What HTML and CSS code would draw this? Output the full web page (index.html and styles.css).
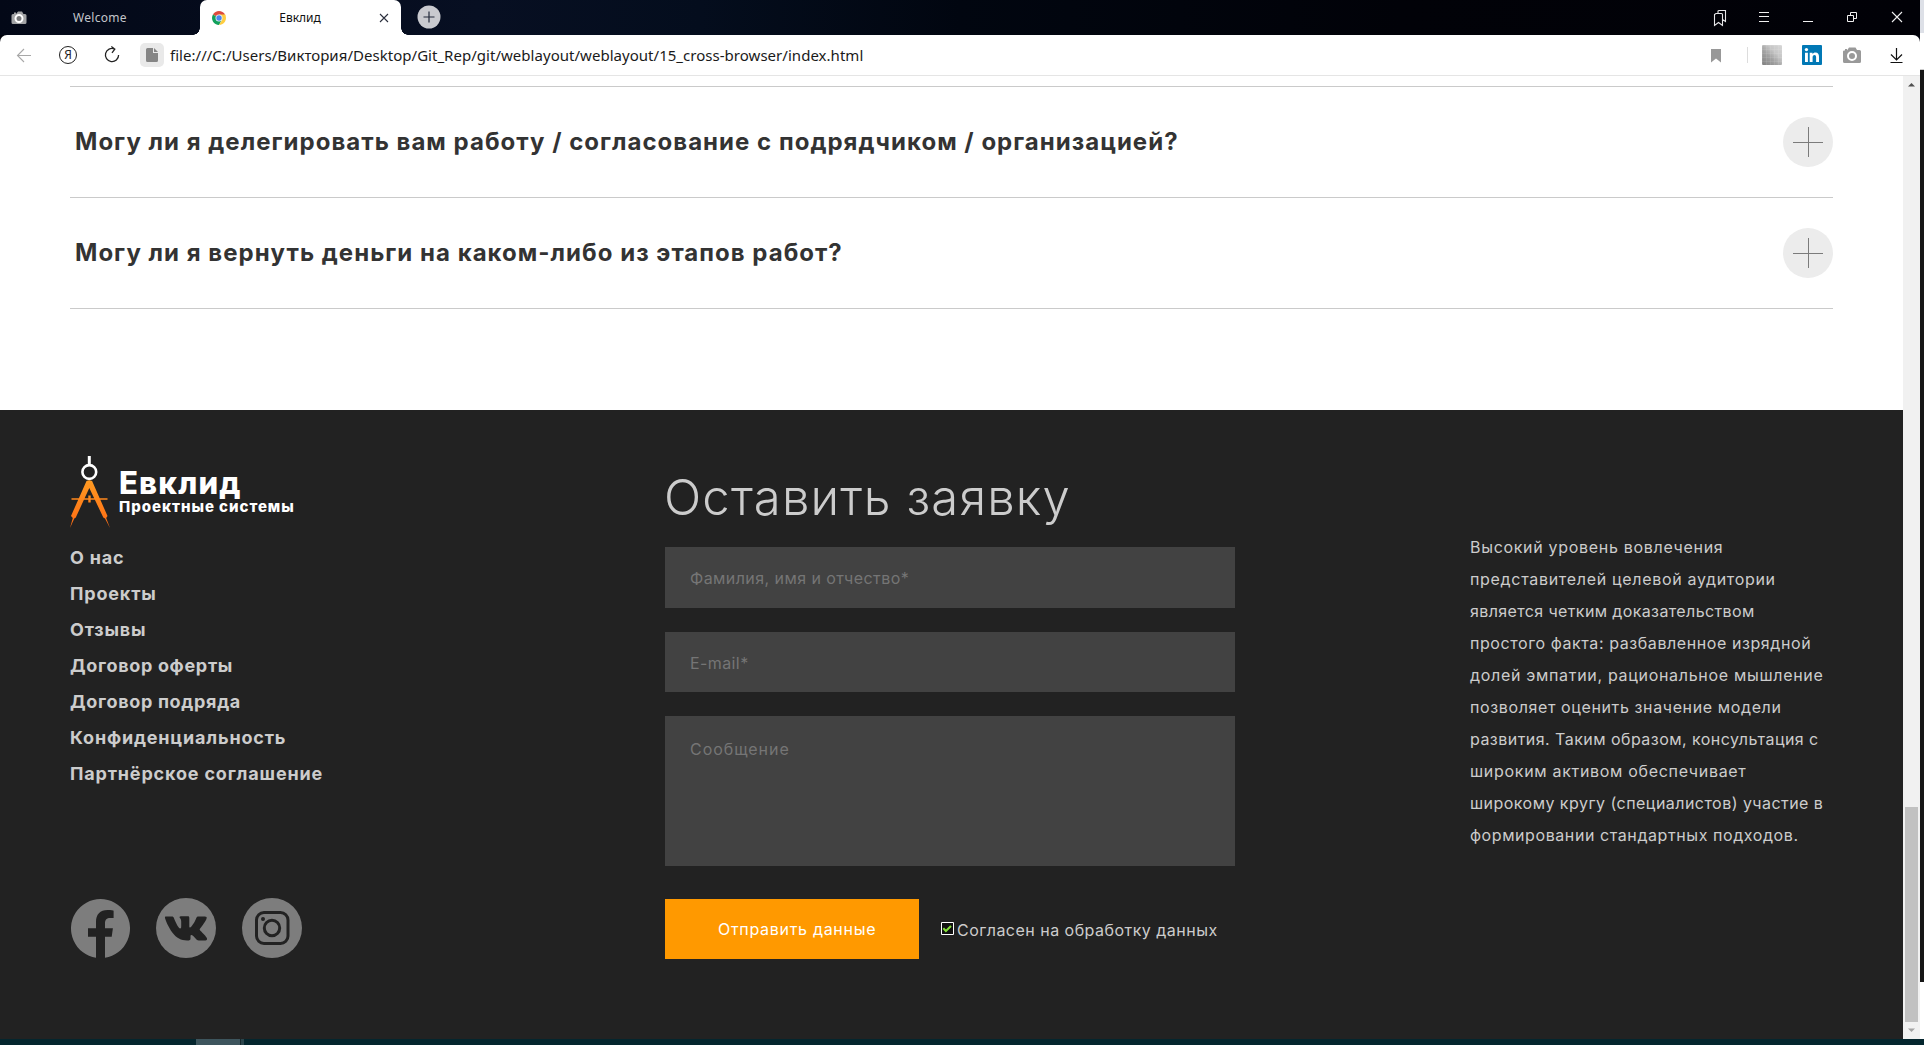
FILE: index.html
```html
<!DOCTYPE html>
<html lang="ru">
<head>
  <meta charset="utf-8">
  <title>Евклид</title>
  <link rel="stylesheet" href="styles.css">
</head>
<body>
  <div class="desktop">
    <div class="window">
      <header class="titlebar">
        <div class="tab">
          <svg class="tab-icon" viewBox="0 0 16 16"><path d="M2 4h1V2.500h2V4l2-2.500h4L12.500 4H14a1.500 1.500 0 0 1 1.500 1.500v7A1.500 1.500 0 0 1 14 14H2a1.500 1.500 0 0 1-1.500-1.500v-7A1.500 1.500 0 0 1 2 4z" fill="#a3a4a6"/><circle cx="8" cy="8.500" r="3.500" fill="#77787a" stroke="#fff" stroke-width="2"/></svg>
          <span class="tab-title tab-title-muted">Welcome</span>
        </div>
        <div class="tab tab-active">
          <svg class="tab-icon" viewBox="0 0 16 16"><path d="M8 8 1.940 4.500A7 7 0 0 1 14.060 4.500z" fill="#dd4b3e"/><path d="M8 8 1.940 4.500A7 7 0 0 0 8 15l3-5.500z" fill="#12a05c"/><path d="M8 8l6.060-3.500A7 7 0 0 1 8 15l3-5z" fill="#fecd41"/><path d="M8 4.600h6.100l.5 1.200L8 8z" fill="#fecd41"/><circle cx="8" cy="8" r="3.500" fill="#f1f1f1"/><circle cx="8" cy="8" r="2.700" fill="#4a86ee"/></svg>
          <span class="tab-title">Евклид</span>
          <svg class="tab-close" viewBox="0 0 10 10"><path d="M1 1l8 8M9 1L1 9" stroke="#2b2f3d" stroke-width="1.100" fill="none"/></svg>
        </div>
        <svg class="tab-new" viewBox="0 0 24 24"><circle cx="12" cy="12" r="11.500" fill="#c9cacf"/><path d="M12 6.500v11M6.500 12h11" stroke="#22283a" stroke-width="1.200"/></svg>
        <div class="window-controls">
          <svg viewBox="0 0 20 20"><path d="M4.500 7.500 6 6.500h5.500a1 1 0 0 1 1 1v11l-4-3-4 3zM8 6.500V4l1-.5h6.500v11l-3-2" fill="none" stroke="#e6e6e8" stroke-width="1.100"/></svg>
          <svg viewBox="0 0 20 20"><path d="M5 5.500h10M5 9.500h10M5 14.500h10" stroke="#f0f0f0"/></svg>
          <svg viewBox="0 0 20 20"><path d="M5 14.500h10" stroke="#f0f0f0"/></svg>
          <svg viewBox="0 0 20 20"><path d="M8.500 8.500v-3h6v6h-3M5.500 8.500h6v6h-6z" fill="none" stroke="#f0f0f0"/></svg>
          <svg viewBox="0 0 20 20"><path d="M6 5l10 10M16 5L6 15" stroke="#f0f0f0" stroke-width="1.100"/></svg>
        </div>
      </header>

      <div class="toolbar">
        <svg class="nav-icon" viewBox="0 0 20 20"><path d="M17 10.500H3.500M10 4l-6.500 6.500L10 17" fill="none" stroke="#a8a8a8" stroke-width="1.100"/></svg>
        <span class="yandex">Я</span>
        <svg class="nav-icon" viewBox="0 0 20 20"><path d="M12.500 3.900A6.600 6.600 0 1 0 16.600 10M9.300 1.500l3.500 2.600L10 7.800" fill="none" stroke="#222" stroke-width="1.300"/></svg>
        <span class="site-badge"><svg viewBox="0 0 12 14"><path d="M1.500 0H7v5h5v7.500a1.500 1.500 0 0 1-1.500 1.500h-9A1.500 1.500 0 0 1 0 12.500v-11A1.500 1.500 0 0 1 1.500 0z" fill="#858585"/><path d="M8 0l4 4H8z" fill="#858585"/></svg></span>
        <span class="url">file:///C:/Users/Виктория/Desktop/Git_Rep/git/weblayout/weblayout/15_cross-browser/index.html</span>
        <div class="extensions">
          <svg class="bookmark" viewBox="0 0 20 20"><path d="M5 4h10v13.500l-5-4-5 4z" fill="#989898"/></svg>
          <span class="separator"></span>
          <span class="ext-tile"></span>
          <svg viewBox="0 0 20 20"><rect width="20" height="20" rx="1" fill="#0178b5"/><path d="M3 7.700h2.900V17H3zM7.700 7.700h2.800V9c.6-.9 1.600-1.500 2.900-1.500 2.700 0 3.600 1.700 3.600 4.300V17h-2.900v-4.700c0-1.200-.3-2.300-1.600-2.300s-1.900 1-1.900 2.300V17H7.700z" fill="#fff"/><circle cx="4.450" cy="4.600" r="1.650" fill="#fff"/></svg>
          <svg viewBox="0 0 20 20"><path d="M2 5.500h1V4h2v1.500L7 2.500h6.500L15 5h2.500A1.500 1.500 0 0 1 19 6.500v10a1.500 1.500 0 0 1-1.500 1.500h-15A1.500 1.500 0 0 1 1 16.500v-10A1.300 1.300 0 0 1 2 5.500z" fill="#999"/><circle cx="10" cy="11" r="4" fill="#999" stroke="#fff" stroke-width="2"/></svg>
          <svg class="download" viewBox="0 0 20 20"><path d="M10.500 3v12M5 9.500l5.500 5.500L16 9.500M4.500 17.500h12" fill="none" stroke="#111" stroke-width="1.200"/></svg>
        </div>
      </div>

      <div class="viewport">
        <main class="page">
          <section class="faq">
            <div class="faq-item">
              <h3 class="faq-title">Могу ли я делегировать вам работу / согласование с подрядчиком / организацией?</h3>
              <svg class="faq-plus" viewBox="0 0 50 50"><circle cx="25" cy="25" r="25" fill="#ececec"/><path d="M25.500 10v30M10 25.500h30" stroke="#7b7b7b"/></svg>
            </div>
            <div class="faq-item">
              <h3 class="faq-title">Могу ли я вернуть деньги на каком-либо из этапов работ?</h3>
              <svg class="faq-plus" viewBox="0 0 50 50"><circle cx="25" cy="25" r="25" fill="#ececec"/><path d="M25.500 10v30M10 25.500h30" stroke="#7b7b7b"/></svg>
            </div>
          </section>

          <footer class="footer">
            <div class="footer-nav">
              <a class="logo">
                <svg class="logo-mark" viewBox="0 0 40 72">
                  <defs><linearGradient id="leg" x1="0" y1="24" x2="0" y2="72" gradientUnits="userSpaceOnUse"><stop offset="0" stop-color="#ff9b22"/><stop offset="1" stop-color="#ff6a13"/></linearGradient></defs>
                  <path d="M17.800 0h3v9h-3z" fill="#fff"/>
                  <circle cx="19.300" cy="16" r="6.900" fill="none" stroke="#fff" stroke-width="2.600"/>
                  <path d="M16.500 25q2.800-1.500 5.600 0L37.500 60l-1.300 2L40 72l-5-9.500-1.700-1L19.300 32 5.800 61.500l-1.500 1L0 72l2.800-10L1 60zM1.500 42.300h36v1.500h-36zM18.300 39.500h2.400v7h-2.400z" fill="url(#leg)"/>
                </svg>
                <span class="logo-text"><span class="logo-name">Евклид</span><span class="logo-sub">Проектные системы</span></span>
              </a>
              <nav class="menu">
                <a>О нас</a>
                <a>Проекты</a>
                <a>Отзывы</a>
                <a>Договор оферты</a>
                <a>Договор подряда</a>
                <a>Конфиденциальность</a>
                <a>Партнёрское соглашение</a>
              </nav>
              <div class="socials">
                <svg viewBox="0 0 60 60"><path d="M26 59.700A29.500 29.500 0 1 1 35 59.700V38.700h6.700l1.200-8.400H35v-5.100c0-3.600 1.700-5.300 5.300-5.300h3.300v-7.200s-2.500-.6-6-.6C30 12.100 26 16.500 26 24.100v6.200h-8v8.400h8z" fill="#7d7d7d"/></svg>
                <svg viewBox="0 0 60 60"><circle cx="30" cy="30" r="30" fill="#7d7d7d"/><path d="M9.800 18.500h6.200c1 0 1.500.5 1.900 1.500 2 5.200 4.800 10.500 6.200 10.500.9 0 1.100-.7 1.100-2.500v-4.500c0-2.500-1-3-1.500-3.700-.4-.7 0-1.500 1-1.500h7.200c1.100 0 1.400.6 1.400 1.700v8.200c0 1 .3 1.300.8 1.300 1 0 4.300-4.700 6.100-9.300.4-1.200 1-1.700 2.200-1.700h6.300c2 0 2.300.8 1.800 2.200-.9 2.800-5.500 8.600-6.400 9.900-.6.9-.5 1.300.1 2 .7.8 4.900 4.600 6.500 7.200.9 1.500.3 2.600-1.400 2.600h-6.500c-1.500 0-2-.6-3-1.700-2.400-2.700-3.600-3.700-4.400-3.700-.6 0-.9.3-.9 1.800v1.600c0 1.400-.5 2-3.500 2-5.800 0-10.600-2.500-14.500-7.700C12 28.700 9.300 21.500 9 20c-.2-1 .1-1.500.8-1.500z" fill="#222"/></svg>
                <svg viewBox="0 0 60 60"><circle cx="30" cy="30" r="30" fill="#7d7d7d"/><rect x="14.500" y="14.500" width="31.500" height="31" rx="7.500" fill="none" stroke="#222" stroke-width="3"/><circle cx="30" cy="30" r="7.700" fill="none" stroke="#222" stroke-width="3"/><circle cx="21" cy="21" r="2" fill="#222"/></svg>
              </div>
            </div>

            <form class="request">
              <h2 class="request-title">Оставить заявку</h2>
              <input class="field field-name" type="text" placeholder="Фамилия, имя и отчество*">
              <input class="field field-mail" type="text" placeholder="E-mail*">
              <textarea class="field field-message" placeholder="Сообщение"></textarea>
              <div class="request-actions">
                <button class="submit" type="button">Отправить данные</button>
                <label class="consent">
                  <svg class="consent-box" viewBox="0 0 13 13"><path d="M.5.500h12v12H.5z" fill="#111" stroke="#fff"/><path d="M2.300 6.200 4.900 9 10 4" fill="none" stroke="#86e03a" stroke-width="2"/></svg>
                  <span>Согласен на обработку данных</span>
                </label>
              </div>
            </form>

            <p class="about">
              <span>Высокий уровень вовлечения</span>
              <span>представителей целевой аудитории</span>
              <span>является четким доказательством</span>
              <span>простого факта: разбавленное изрядной</span>
              <span>долей эмпатии, рациональное мышление</span>
              <span>позволяет оценить значение модели</span>
              <span>развития. Таким образом, консультация с</span>
              <span>широким активом обеспечивает</span>
              <span>широкому кругу (специалистов) участие в</span>
              <span>формировании стандартных подходов.</span>
            </p>
          </footer>
        </main>

        <div class="scrollbar">
          <svg class="scroll-arrow" viewBox="0 0 17 17"><path d="M5 10.500 8.500 7l3.500 3.500z" fill="#505050"/></svg>
          <div class="scroll-thumb"></div>
          <svg class="scroll-arrow" viewBox="0 0 17 17"><path d="M5 6.500 8.500 10 12 6.500z" fill="#a3a3a3"/></svg>
        </div>
      </div>
    </div>
    <div class="backdrop"></div>
    <div class="taskbar"><span class="task"></span><span class="task-edge"></span></div>
  </div>
</body>
</html>
```
FILE: styles.css
```css
* {
  box-sizing: border-box;
}

body {
  margin: 0;
  overflow: hidden;
  font-family: Inter, "Liberation Sans", sans-serif;
}

svg {
  display: block;
  flex: none;
}

.desktop {
  display: grid;
  grid-template-columns: 1920px 4px;
  grid-template-rows: 1039px 6px;
  width: 1924px;
  height: 1045px;
}

.window {
  display: flex;
  flex-direction: column;
  background: #01030c;
}

.backdrop {
  background: linear-gradient(#dde0e7 33px, #fff 33px, #fff 69px, #ccc 69px, #ccc 70px, #161616 70px, #161616 982px, #fff 982px);
}

.taskbar {
  grid-column: 1 / 3;
  display: flex;
  padding-left: 196px;
  background: #04262e;
}

.task {
  width: 44px;
  background: #3d555d;
}

.task-edge {
  width: 4px;
  border-left: 1px solid #16282d;
  background: #2b444b;
}

/* Tabs */

.titlebar {
  display: flex;
  align-items: flex-start;
  height: 35px;
  padding-right: 14px;
  background: linear-gradient(90deg, #030817 0, #070f22 480px, #040d1d 700px, #010610 960px, #010208 1400px, #010107);
}

.tab {
  position: relative;
  display: flex;
  align-items: center;
  width: 200px;
  height: 35px;
  padding-left: 11px;
}

.tab-active {
  width: 201px;
  border-radius: 7px 7px 0 0;
  background: #fff;
}

.tab-active::before,
.tab-active::after {
  content: "";
  position: absolute;
  bottom: 0;
  width: 7px;
  height: 7px;
}

.tab-active::before {
  left: -7px;
  background: radial-gradient(circle at 0 0, transparent 6.5px, #fff 7px);
}

.tab-active::after {
  right: -7px;
  background: radial-gradient(circle at 100% 0, transparent 6.5px, #fff 7px);
}

.tab-icon {
  width: 16px;
  height: 16px;
}

.tab-title {
  width: 146px;
  font: 12px/34px "Noto Sans", sans-serif;
  text-align: center;
  color: #111;
}

.tab-title-muted {
  letter-spacing: 0.3px;
  color: #c3c5ca;
}

.tab-close {
  width: 10px;
  height: 10px;
  margin-left: 6px;
}

.tab-new {
  width: 24px;
  height: 24px;
  margin: 5px auto 0 16px;
}

.window-controls {
  display: flex;
  gap: 24px;
  padding-top: 7px;
}

.window-controls svg {
  width: 20px;
  height: 20px;
}

/* Address bar */

.toolbar {
  display: flex;
  align-items: center;
  height: 41px;
  padding: 0 14px;
  border-bottom: 1px solid #e5e5e5;
  border-radius: 7px 7px 0 0;
  background: #fff;
}

.nav-icon {
  width: 20px;
  height: 20px;
}

.yandex {
  width: 18px;
  height: 18px;
  margin: 0 25px;
  border: 1px solid #222;
  border-radius: 50%;
  font: 12px/16px "Noto Sans", sans-serif;
  text-align: center;
  color: #222;
}

.site-badge {
  display: flex;
  align-items: center;
  justify-content: center;
  width: 24px;
  height: 24px;
  margin-left: 18px;
  border-radius: 5px;
  background: #e9e9e9;
}

.site-badge svg {
  width: 12px;
  height: 14px;
}

.url {
  margin: 0 auto 0 6px;
  font: 15px/24px "Noto Sans", sans-serif;
  letter-spacing: 0.03px;
  color: #1a1a1a;
}

.extensions {
  display: flex;
  align-items: center;
  gap: 20px;
}

.extensions svg,
.ext-tile {
  width: 20px;
  height: 20px;
}

.extensions .bookmark {
  margin-right: 1px;
}

.separator {
  width: 1px;
  height: 16px;
  margin-right: -6px;
  background: #ddd;
}

.ext-tile {
  border-radius: 1px;
  background:
    repeating-linear-gradient(90deg, #ffffff18 0 1px, transparent 1px 4px),
    repeating-linear-gradient(#ffffff18 0 1px, transparent 1px 4px),
    linear-gradient(45deg, #808080, #a2a2a2 40%, #c6c6c6 65%, #d8d8d8);
}

.extensions .download {
  margin-left: 4px;
}

/* Page viewport */

.viewport {
  display: flex;
  height: 963px;
  background: #fff;
}

.page {
  width: 1903px;
}

.scrollbar {
  display: flex;
  flex-direction: column;
  width: 17px;
  background: #f1f1f1;
}

.scroll-arrow {
  width: 17px;
  height: 17px;
}

.scroll-thumb {
  height: 215px;
  margin: auto 2px 0;
  background: #c1c1c1;
}

.faq {
  height: 334px;
  padding: 10px 70px 0;
}

.faq-item {
  display: flex;
  align-items: center;
  justify-content: space-between;
  height: 111px;
  padding-left: 5px;
  border-top: 1px solid #cacaca;
}

.faq-item:last-child {
  height: 112px;
  border-bottom: 1px solid #cacaca;
}

.faq-title {
  margin: 0;
  font-size: 24px;
  font-weight: 700;
  line-height: 30px;
  letter-spacing: 1.02px;
  color: #333;
}

.faq-plus {
  width: 50px;
  height: 50px;
}

/* Footer */

.footer {
  display: grid;
  grid-template-columns: 595px 805px 1fr;
  align-items: start;
  height: 629px;
  padding-left: 70px;
  background: #222;
  color: #ccc;
}

.footer-nav {
  padding-top: 46px;
}

.logo {
  display: flex;
  gap: 9px;
  height: 72px;
  color: #fff;
}

.logo-mark {
  width: 40px;
  height: 72px;
}

.logo-text {
  display: flex;
  flex-direction: column;
  padding-top: 11px;
  font-weight: 800;
  white-space: nowrap;
}

.logo-name {
  font-size: 31px;
  line-height: 32px;
  letter-spacing: 1.2px;
}

.logo-sub {
  margin-top: -1px;
  font-size: 15px;
  line-height: 17px;
  letter-spacing: 0.97px;
}

.menu {
  display: flex;
  flex-direction: column;
  margin-top: 12px;
  font-size: 18px;
  font-weight: 700;
  line-height: 36px;
  letter-spacing: 0.82px;
}

.menu a:nth-child(4),
.menu a:nth-child(5) {
  letter-spacing: 0.68px;
}

.socials {
  display: flex;
  gap: 26px;
  margin-top: 106px;
}

.socials svg {
  width: 60px;
  height: 60px;
}

.request {
  display: flex;
  flex-direction: column;
  width: 570px;
  padding-top: 58px;
}

.request-title {
  margin: 0 0 19px -1px;
  font-size: 49px;
  font-weight: 350;
  line-height: 60px;
  letter-spacing: 1.15px;
}

.field {
  width: 570px;
  height: 60px;
  margin: 0 0 24px;
  padding: 1px 25px 0;
  border: 0;
  border-radius: 0;
  outline: 0;
  background: #424242;
  font: 16px/20px Inter, sans-serif;
  resize: none;
}

.field::placeholder {
  color: #757575;
}

.field-name {
  height: 61px;
  letter-spacing: 0.43px;
}

.field-mail {
  letter-spacing: 0.4px;
}

.field-message {
  height: 150px;
  margin-bottom: 33px;
  padding-top: 23px;
  letter-spacing: 0.95px;
}

.request-actions {
  display: flex;
  align-items: center;
  gap: 22px;
}

.submit {
  width: 254px;
  height: 60px;
  padding: 0 0 0 53px;
  border: 0;
  background: #ff9900;
  font: 16px/20px Inter, sans-serif;
  letter-spacing: 0.7px;
  text-align: left;
  color: #fff;
}

.consent {
  display: flex;
  align-items: center;
  gap: 3px;
  padding-top: 1px;
  font-size: 16px;
  line-height: 20px;
  letter-spacing: 0.48px;
}

.consent-box {
  width: 13px;
  height: 13px;
  margin-top: -2px;
}

.about {
  display: flex;
  flex-direction: column;
  margin: 0;
  padding-top: 121px;
  font-size: 16px;
  line-height: 32px;
  letter-spacing: 0.69px;
  white-space: nowrap;
}

.about span:nth-child(3) {
  letter-spacing: 0.38px;
}

.about span:nth-child(7),
.about span:nth-child(9) {
  letter-spacing: 0.46px;
}

.about span:nth-child(4),
.about span:nth-child(10) {
  letter-spacing: 0.58px;
}

.about span:nth-child(6) {
  letter-spacing: 0.62px;
}
```
